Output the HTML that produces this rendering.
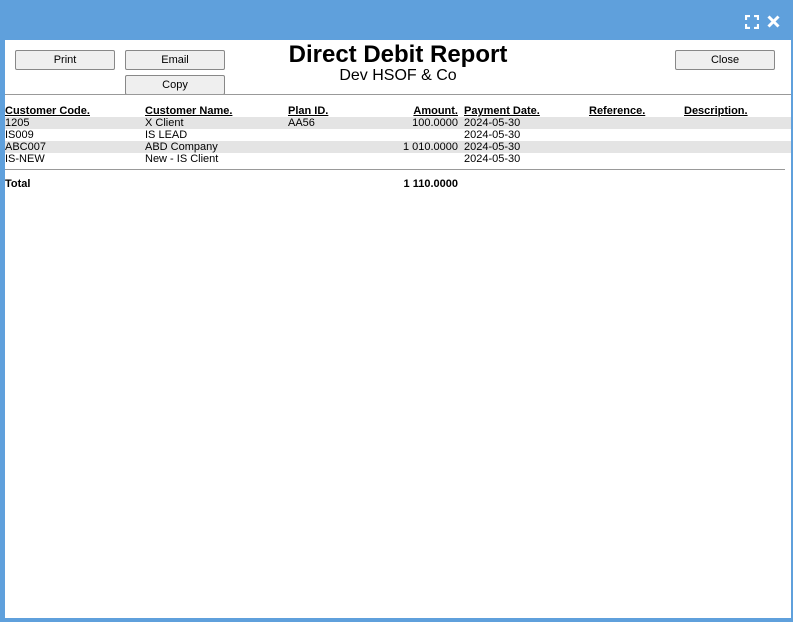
<html><head><style>
body{margin:0;width:793px;height:622px;background:#5fa0dc;position:relative;overflow:hidden;font-family:"Liberation Sans",Arial,sans-serif;}
.win{position:absolute;left:5px;top:40px;width:786px;height:578px;background:#fff;}
.in{position:absolute;left:0;top:1px;width:786px;height:577px;}
.btn{position:absolute;width:98px;height:18px;border:1px solid #888;border-radius:2px;background:#efefef;font-size:11px;text-align:center;line-height:18px;color:#000;}
.a{position:absolute;font-size:11px;line-height:12px;white-space:nowrap;}
.h{font-weight:bold;text-decoration:underline;}
.band{position:absolute;left:0;width:786px;height:12px;background:#e4e4e4;}
</style></head><body>
<svg style="position:absolute;left:745px;top:15px" width="14" height="14" viewBox="0 0 14 14" fill="none" stroke="#fff" stroke-width="2.2"><path d="M1 5V1h4M9 1h4v4M13 9v4H9M5 13H1V9"/></svg>
<svg style="position:absolute;left:767px;top:15px" width="13" height="13" viewBox="0 0 13 13" stroke="#fff" stroke-width="3"><path d="M1.5 1.5l10 10M11.5 1.5l-10 10"/></svg>
<div class="win"><div class="in">
<div class="btn" style="left:10px;top:9px">Print</div>
<div class="btn" style="left:120px;top:9px">Email</div>
<div class="btn" style="left:120px;top:34px">Copy</div>
<div class="btn" style="left:670px;top:9px">Close</div>
<div style="position:absolute;left:0;width:786px;top:0;text-align:center;font-weight:bold;font-size:24px;line-height:28px;">Direct Debit Report</div>
<div style="position:absolute;left:0;width:786px;top:26px;text-align:center;font-size:16px;line-height:18px">Dev HSOF &amp; Co</div>
<div style="position:absolute;left:0;top:53px;width:786px;height:1px;background:#999"></div>
<div class="a h" style="left:0;top:64px">Customer Code.</div>
<div class="a h" style="left:140px;top:64px">Customer Name.</div>
<div class="a h" style="left:283px;top:64px">Plan ID.</div>
<div class="a h" style="right:333px;top:64px">Amount.</div>
<div class="a h" style="left:459px;top:64px">Payment Date.</div>
<div class="a h" style="left:584px;top:64px">Reference.</div>
<div class="a h" style="left:679px;top:64px">Description.</div>
<div class="band" style="top:76px"></div>
<div class="band" style="top:100px"></div>
<div class="a" style="left:0;top:76px">1205</div><div class="a" style="left:140px;top:76px">X Client</div><div class="a" style="left:283px;top:76px">AA56</div><div class="a" style="right:333px;top:76px">100.0000</div><div class="a" style="left:459px;top:76px">2024-05-30</div>
<div class="a" style="left:0;top:88px">IS009</div><div class="a" style="left:140px;top:88px">IS LEAD</div><div class="a" style="left:459px;top:88px">2024-05-30</div>
<div class="a" style="left:0;top:100px">ABC007</div><div class="a" style="left:140px;top:100px">ABD Company</div><div class="a" style="right:333px;top:100px">1 010.0000</div><div class="a" style="left:459px;top:100px">2024-05-30</div>
<div class="a" style="left:0;top:112px">IS-NEW</div><div class="a" style="left:140px;top:112px">New - IS Client</div><div class="a" style="left:459px;top:112px">2024-05-30</div>
<div style="position:absolute;left:0;top:128px;width:780px;height:1px;background:#999"></div>
<div class="a" style="left:0;top:137px;font-weight:bold">Total</div>
<div class="a" style="right:333px;top:137px;font-weight:bold">1 110.0000</div>
</div></div>
</body></html>
